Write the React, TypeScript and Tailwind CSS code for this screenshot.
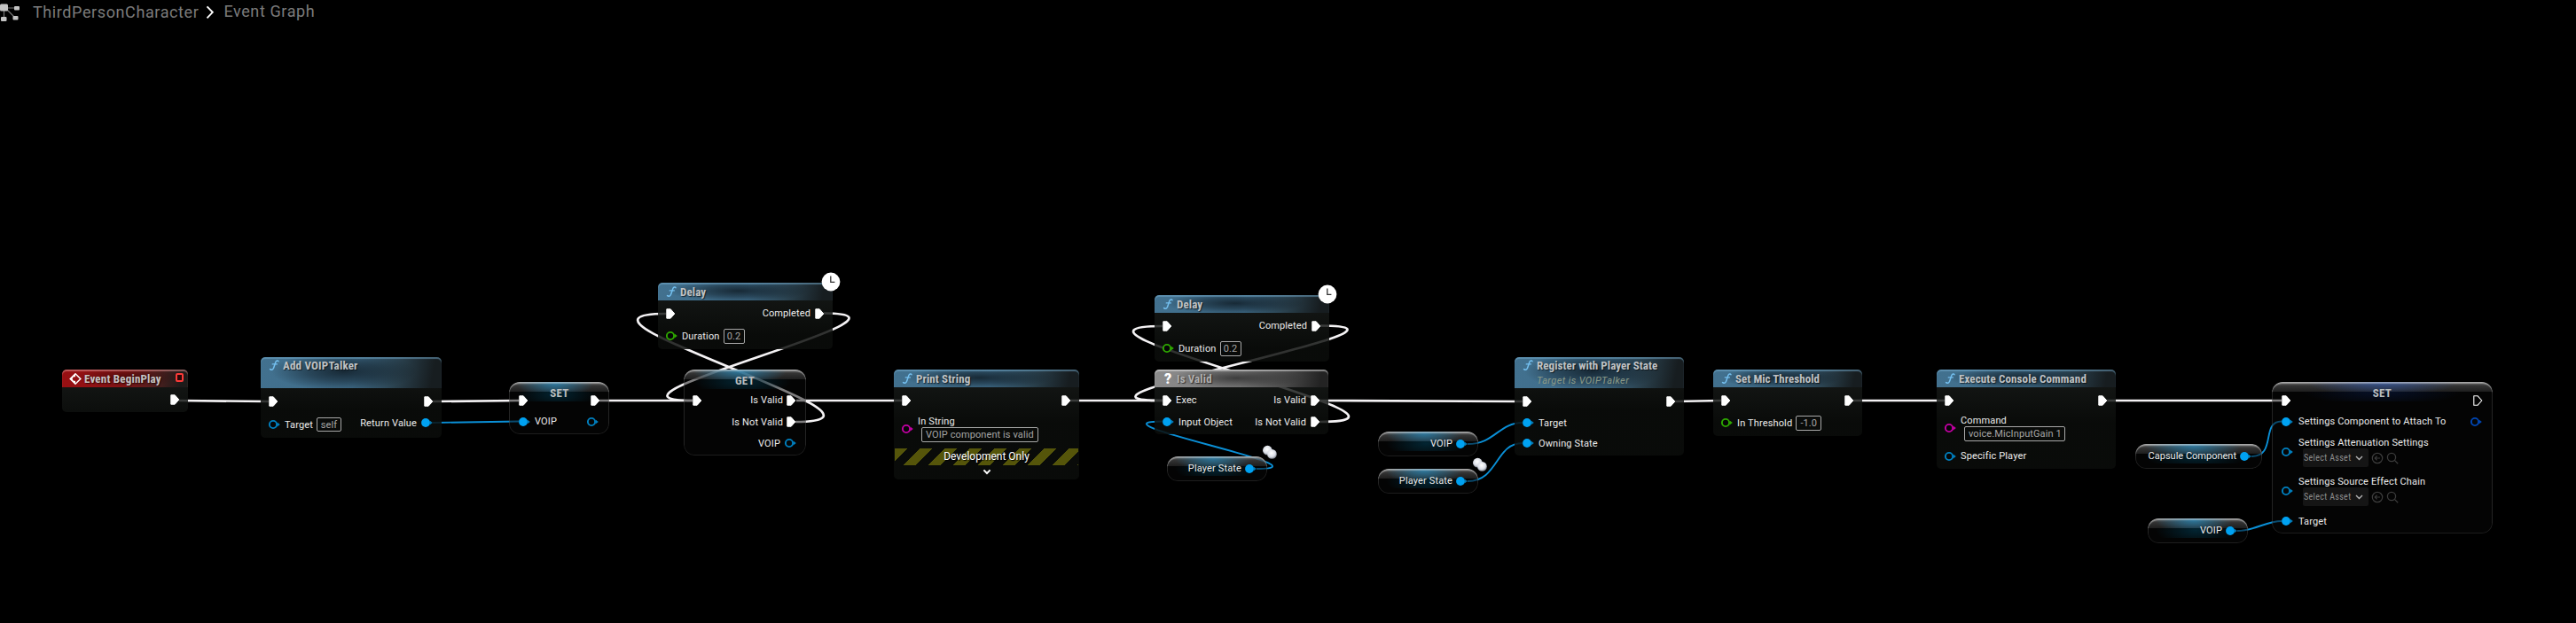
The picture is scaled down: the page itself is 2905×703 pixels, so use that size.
import type { ReactNode } from 'react';

const BLUE = '#00a2f2';
const RING = '#0080c0';
const GREEN = '#2ea800';
const PINK = '#c400a4';
const NAVY = '#0046b4';

function Exec({ hollow = false }: { hollow?: boolean }) {
  return (
    <svg className="h-3 w-[11px] shrink-0" viewBox="0 0 11 12">
      <path
        d="M.8.8h4.4l4.6 5.2-4.6 5.2H.8z"
        fill={hollow ? 'none' : '#fff'}
        stroke="#fff"
        strokeWidth={hollow ? 1.1 : 1}
        strokeLinejoin="round"
      />
    </svg>
  );
}

function Pin({ color, filled = false }: { color: string; filled?: boolean }) {
  return (
    <svg className="h-3 w-[13px] shrink-0" viewBox="0 0 13 12">
      <path d="M9.6 3.4 12.8 6 9.6 8.6z" fill={color} opacity={filled ? 0.75 : 1} />
      <circle cx="5" cy="6" r={filled ? 4.9 : 4.1} fill={filled ? color : '#050606'} stroke={filled ? 'none' : color} strokeWidth="1.9" />
    </svg>
  );
}

function Label({ children, className = 'tracking-[0.14px]' }: { children: ReactNode; className?: string }) {
  return <span className={`whitespace-nowrap text-[11px] leading-[13px] text-[#ececec] ${className}`}>{children}</span>;
}

function Box({ children, className = '' }: { children: ReactNode; className?: string }) {
  return (
    <span className={`flex items-center whitespace-nowrap rounded-[2px] border border-[#a8a8a8] text-[11px] leading-none tracking-[0.1px] text-[#a6a6a6] ${className}`}>
      {children}
    </span>
  );
}

function Row({ children, className = 'h-5' }: { children: ReactNode; className?: string }) {
  return <div className={`flex items-center justify-between pl-[9px] pr-[9px] ${className}`}>{children}</div>;
}

function Side({ children, className = 'gap-[5px]' }: { children?: ReactNode; className?: string }) {
  return <div className={`flex items-center ${className}`}>{children}</div>;
}

const HEADS = {
  func: 'bg-[radial-gradient(ellipse_40%_62%_at_46%_46%,rgba(12,22,30,0.78),rgba(12,22,30,0.45)_50%,transparent),linear-gradient(100deg,#42718f_0%,#3f6c89_52%,#2a414e_75%,#171d20_94%)] shadow-[inset_0_2px_1px_rgba(120,175,210,0.5)]',
  event: 'bg-[radial-gradient(ellipse_40%_60%_at_50%_45%,rgba(40,4,4,0.6),transparent),linear-gradient(100deg,#980f12_0%,#8c1517_50%,#55201f_72%,#1d1b1a_94%)] shadow-[inset_0_2px_1px_rgba(225,150,150,0.55)]',
  macro: 'bg-[radial-gradient(ellipse_38%_60%_at_47%_48%,rgba(20,20,20,0.6),transparent),linear-gradient(100deg,#8c8c8c_0%,#7a7a7a_50%,#4c4c4c_74%,#232323_95%)] shadow-[inset_0_2px_1px_rgba(235,235,235,0.5)]',
};

const FuncIcon = () => (
  <svg className="h-3 w-[14px] shrink-0" viewBox="0 0 14 12" fill="none" stroke="#74c0f0" strokeLinecap="round">
    <path d="M12 1.7C11.5.5 9.8.6 9 2.3 8 4.5 7.3 8 6.2 10 5.3 11.6 3.5 11.6 2.6 10.5" strokeWidth="1.5" />
    <path d="M5.2 4.9h5.2" strokeWidth="1.2" />
  </svg>
);

function Node({ place, title, titleClass = 'tracking-[0.12px] text-[#bfc2c5]', kind = 'func', icon = <FuncIcon />, sub, tall = false, badge, children }: {
  place: string; title: string; titleClass?: string; kind?: keyof typeof HEADS; icon?: ReactNode; sub?: string; tall?: boolean; badge?: ReactNode; children: ReactNode;
}) {
  return (
    <div className={`absolute flex flex-col rounded-[5px] bg-[linear-gradient(to_bottom,rgba(22,25,23,0.82)_20px,rgba(11,13,11,0.84)_60px)] ${place}`}>
      <div className={`flex shrink-0 items-start rounded-t-[5px] pl-[8px] ${tall ? 'h-[35px] pt-[3px]' : 'h-5 pt-[3.5px]'} ${HEADS[kind]}`}>
        {icon}
        <div className="ml-[3px] flex flex-col">
          <span className={`whitespace-nowrap font-['Roboto_Condensed',Roboto,sans-serif] text-[13px] font-bold leading-[13px] [text-shadow:1px_1px_1px_rgba(0,0,0,0.6)] ${titleClass}`}>{title}</span>
          {sub && <span className="mt-[4px] whitespace-nowrap text-[11px] italic leading-[13px] tracking-[0.4px] text-[#8c9b88]">{sub}</span>}
        </div>
        {badge}
      </div>
      {children}
    </div>
  );
}

function Gloss({ navy = false }: { navy?: boolean }) {
  return (
    <>
      <div className="absolute inset-x-0 top-0 h-[11px] bg-[linear-gradient(to_bottom,rgba(165,165,165,0.65),rgba(90,90,90,0.55)_40%,rgba(50,50,50,0.55))]" />
      <div className={navy
        ? 'absolute inset-x-0 top-0 h-[11px] bg-[radial-gradient(ellipse_34%_130%_at_50%_10%,rgba(50,85,160,0.75),transparent)]'
        : 'absolute inset-x-0 top-0 h-[11px] bg-[radial-gradient(ellipse_38%_140%_at_46%_20%,rgba(40,130,175,0.8),transparent)]'} />
      <div className={navy
        ? 'absolute inset-x-0 top-[11px] h-[11px] bg-[radial-gradient(ellipse_36%_140%_at_50%_0%,rgba(8,25,65,0.6),transparent)]'
        : 'absolute inset-x-0 top-[11px] h-[11px] bg-[radial-gradient(ellipse_40%_160%_at_48%_20%,rgba(2,45,62,0.8),transparent)]'} />
    </>
  );
}

function VarNode({ place, navy, children }: { place: string; navy?: boolean; children: ReactNode }) {
  return (
    <div className={`absolute overflow-hidden rounded-[12px] bg-[rgba(7,8,8,0.5)] ${place}`}>
      <Gloss navy={navy} />
      <div className="absolute inset-0 rounded-[12px] shadow-[inset_0_0_0_1px_rgba(255,255,255,0.1),inset_0_2px_1px_rgba(255,255,255,0.35)]" />
      <div className="relative flex h-full flex-col">{children}</div>
    </div>
  );
}

function Pill({ place, label, labelClass = 'tracking-[0.14px]' }: { place: string; label: string; labelClass?: string }) {
  return (
    <VarNode place={`h-[28px] ${place}`}>
      <div className="flex h-full items-center justify-end gap-[4px] pr-[12px]">
        <Label className={`pb-[1px] ${labelClass}`}>{label}</Label>
        <Pin color={BLUE} filled />
      </div>
    </VarNode>
  );
}

const VarTitle = ({ children }: { children: ReactNode }) => (
  <span className="block font-['Roboto_Condensed',Roboto,sans-serif] text-[13px] font-bold leading-[13px] tracking-[0.3px] text-[#b9bdbf]">{children}</span>
);

function Clock() {
  return (
    <svg className="absolute -right-[9px] -top-[12px] size-[22px]" viewBox="0 0 22 22">
      <circle cx="11" cy="11" r="10.4" fill="#fff" />
      <path d="M10.8 4.4v7h4.6" fill="none" stroke="#333" strokeWidth="1.3" />
    </svg>
  );
}

function Balls({ place }: { place: string }) {
  return (
    <svg className={`absolute h-[17px] w-[18px] ${place}`} viewBox="0 0 18 17">
      <defs>
        <radialGradient id="ball" cx="45%" cy="38%" r="62%">
          <stop offset="0" stopColor="#fff" />
          <stop offset="0.65" stopColor="#d9dde6" />
          <stop offset="1" stopColor="#7d828c" />
        </radialGradient>
      </defs>
      <circle cx="6.4" cy="6.2" r="5.4" fill="url(#ball)" />
      <circle cx="11.4" cy="10.4" r="5.4" fill="url(#ball)" />
    </svg>
  );
}

function Delay({ place }: { place: string }) {
  return (
    <Node place={`h-[75px] w-[197px] ${place}`} title="Delay" badge={<Clock />}>
      <Row className="h-[30px]">
        <Exec />
        <Side><Label className="pb-[1px] tracking-[0.1px]">Completed</Label><Exec /></Side>
      </Row>
      <Row>
        <Side><Pin color={GREEN} /><Label>Duration</Label><Box className="-ml-[1px] h-[17px] w-[24px] justify-center">0.2</Box></Side>
      </Row>
    </Node>
  );
}

function AssetRow({ label }: { label: string }) {
  return (
    <div className="flex h-[44px] items-start gap-[6px] pl-[11px] pt-[6px]">
      <div className="pt-[11px]"><Pin color={RING} /></div>
      <div className="flex flex-col">
        <Label>{label}</Label>
        <div className="ml-[5px] flex items-center">
          <div className="flex h-[21px] w-[74px] items-center justify-between rounded-[2px] bg-[#151515] pl-[1px] pr-[6px]">
            <span className="whitespace-nowrap font-['Roboto_Condensed',Roboto,sans-serif] text-[10px] leading-none tracking-[0.35px] text-[#8e8e8e]">Select Asset</span>
            <svg className="h-[6px] w-[9px]" viewBox="0 0 9 6"><path d="m1 1 3.5 3.5L8 1" fill="none" stroke="#b4b4b4" strokeWidth="1.4" /></svg>
          </div>
          <svg className="ml-[3px] size-[14px]" viewBox="0 0 14 14" fill="none" stroke="#3c3c3c" strokeWidth="1.2">
            <circle cx="7" cy="7" r="5.7" /><path d="M10 7H4.4M6.6 4.6 4.2 7l2.4 2.4" />
          </svg>
          <svg className="ml-[3px] size-[14px]" viewBox="0 0 14 14" fill="none" stroke="#3c3c3c" strokeWidth="1.3">
            <circle cx="6" cy="6" r="4.6" /><path d="m9.4 9.4 3.8 3.8" />
          </svg>
        </div>
      </div>
    </div>
  );
}

const EXEC_WIRES = [
  'M202 452 303 453', 'M488 453 585 452', 'M676 452H781', 'M898 452H1017', 'M1207 452H1311', 'M1488 452 1717 453',
  'M1889 453 1941 452', 'M2090 452H2193', 'M2376 452H2573',
  'M897 476C1049 476 599 354 751 354', 'M929 353.5C1069 353.5 641 452 781 452',
  'M1488 476C1651 476 1148 368 1311 368', 'M1489 367.5C1643 367.5 1157 452 1311 452',
];
const DATA_WIRES = [
  'M488 477 585 475.5', 'M1417 529C1508 529 1220 475.5 1311 475.5', 'M1655 501C1686 501 1690 477 1717 477',
  'M1655 543C1690 543 1686 500 1717 500', 'M2539 515C2568 515 2549 475.5 2573 475.5', 'M2523 599C2542 599 2556 588 2573 588',
];

export default function App() {
  return (
    <div className="relative h-[703px] w-[2905px] overflow-hidden bg-black font-['Roboto',sans-serif]">
      <header className="flex h-[28px] items-center text-[18px] leading-none tracking-[0.6px] text-[#7b7b7b]">
        <svg className="h-[28px] w-[24px]" viewBox="0 0 24 28">
          <path d="M6 9h12M4.5 9v12M8 11l9 9" stroke="#777" strokeWidth="1.2" />
          <g fill="#c4c4c4">
            <rect x="0" y="4.5" width="9" height="8" rx="1.5" />
            <rect x="16" y="7" width="6" height="4.5" rx="1" />
            <rect x="1" y="19" width="6.5" height="5" rx="1" />
            <rect x="14.5" y="18" width="6" height="4.5" rx="1" />
          </g>
        </svg>
        <span className="ml-[13px] whitespace-nowrap">ThirdPersonCharacter</span>
        <svg className="ml-[8px] h-[16px] w-[10px]" viewBox="0 0 10 16"><path d="m1.5 1.3 6.3 6.5-6.3 6.6" fill="none" stroke="#fff" strokeWidth="1.9" /></svg>
        <span className="ml-[10px] whitespace-nowrap pb-[2px]">Event Graph</span>
      </header>

      <svg className="absolute left-0 top-0 h-[703px] w-[2905px]" viewBox="0 0 2905 703" fill="none">
        <g stroke="#f4f2f4" strokeWidth="2.7">{EXEC_WIRES.map((d) => <path key={d} d={d} />)}</g>
        <g stroke="#0a8fd6" strokeWidth="1.9">{DATA_WIRES.map((d) => <path key={d} d={d} />)}</g>
      </svg>

      <Node
        place="left-[70px] top-[417px] h-[48px] w-[142px]"
        kind="event"
        title="Event BeginPlay"
        titleClass="tracking-[0.2px] text-[#c6c2c2]"
        icon={
          <svg className="h-[13px] w-[14px] shrink-0" viewBox="0 0 14 13">
            <path d="M7 .8 12.8 6.5 7 12.2 1.2 6.5z" fill="none" stroke="#fff" strokeWidth="1.5" />
            <path d="M7 .8v3.4H4.8L3.5 6.5l1.3 2.3H7v3.4L1.2 6.5z" fill="#fff" />
          </svg>
        }
        badge={<span className="ml-auto mr-[5px] h-[10px] w-[9px] rounded-[2px] border-2 border-[#fb3a38] bg-[#2a0808]" />}
      >
        <div className="flex h-[30px] items-center justify-end pr-[9px]"><Exec /></div>
      </Node>

      <Node place="left-[294px] top-[403px] h-[91px] w-[204px]" title="Add VOIPTalker" titleClass="tracking-[0.2px] text-[#bfc2c5]" tall>
        <Row className="h-[30px]"><Exec /><Exec /></Row>
        <Row>
          <Side className="gap-[5px] pt-[2px]"><Pin color={RING} /><Label>Target</Label><Box className="-ml-[1px] h-[16px] w-[28px] justify-center">self</Box></Side>
          <Side className="gap-[5px] pb-[2px] pr-px"><Label>Return Value</Label><Pin color={BLUE} filled /></Side>
        </Row>
      </Node>

      <VarNode place="left-[574px] top-[431px] h-[59px] w-[113px]">
        <div className="flex h-[33px] items-end justify-between pb-[6px] pl-[11px] pr-[10px]">
          <Exec /><div className="self-start pt-[6px]"><VarTitle>SET</VarTitle></div><Exec />
        </div>
        <div className="flex h-[23px] items-center justify-between pl-[11px] pr-[12px]">
          <Side><Pin color={BLUE} filled /><Label>VOIP</Label></Side>
          <Pin color={RING} />
        </div>
      </VarNode>

      <Delay place="left-[742px] top-[319px]" />

      <VarNode place="left-[771px] top-[417px] h-[97px] w-[138px]">
        <div className="flex h-[23px] items-start justify-center pt-[6px]"><VarTitle>GET</VarTitle></div>
        <div className="flex h-6 items-center justify-between pl-[10px] pr-[11px]">
          <Exec />
          <Side className="gap-[4px]"><Label className="pb-[1px] tracking-[0.14px]">Is Valid</Label><Exec /></Side>
        </div>
        <div className="flex h-6 items-center justify-end gap-[4px] pr-[11px]"><Label>Is Not Valid</Label><Exec /></div>
        <div className="flex h-6 items-center justify-end gap-[5px] pr-[11px]"><Label>VOIP</Label><Pin color={RING} /></div>
      </VarNode>

      <Node place="left-[1008px] top-[417px] h-[124px] w-[209px]" title="Print String">
        <Row className="h-[30px]"><Exec /><Exec /></Row>
        <Row className="h-[34px]">
          <Side>
            <Pin color={PINK} />
            <div className="flex flex-col"><Label>In String</Label><Box className="ml-[4px] h-[17px] w-[132px] pl-[4px]">VOIP component is valid</Box></div>
          </Side>
        </Row>
        <div className="mx-px mt-[5px] flex h-[19px] items-center justify-center bg-[repeating-linear-gradient(135deg,#55550a_0,#55550a_9.9px,transparent_9.9px,transparent_19.8px)]">
          <span className="whitespace-nowrap pb-[2px] text-[12px] leading-none text-white [text-shadow:1px_1px_1px_#000]">Development Only</span>
        </div>
        <svg className="mx-auto mt-[4px] h-[7px] w-[10px]" viewBox="0 0 10 7"><path d="m1.4 1.4 3.6 3.6 3.6-3.6" fill="none" stroke="#fff" strokeWidth="2" /></svg>
      </Node>

      <Delay place="left-[1302px] top-[333px]" />

      <Node
        place="left-[1302px] top-[417px] h-[73px] w-[196px]"
        kind="macro"
        title="Is Valid"
        titleClass="tracking-[0.12px] text-[#b0b0b0]"
        icon={<span className="w-[14px] shrink-0 text-center text-[16px] font-black leading-[14px] text-white">?</span>}
      >
        <Row className="h-[30px]">
          <Side className="gap-[4px]"><Exec /><Label className="pb-[1px] tracking-[0.14px]">Exec</Label></Side>
          <Side><Label className="pb-[1px] tracking-[0.14px]">Is Valid</Label><Exec /></Side>
        </Row>
        <Row className="h-[18px]">
          <Side><Pin color={BLUE} filled /><Label>Input Object</Label></Side>
          <Side><Label>Is Not Valid</Label><Exec /></Side>
        </Row>
      </Node>

      <Pill place="left-[1316px] top-[515px] w-[113px]" label="Player State" />
      <Balls place="left-[1423px] top-[502px]" />
      <Pill place="left-[1554px] top-[487px] w-[113px]" label="VOIP" />
      <Pill place="left-[1554px] top-[529px] w-[113px]" label="Player State" />
      <Balls place="left-[1660px] top-[516px]" />

      <Node place="left-[1708px] top-[403px] h-[111px] w-[191px]" title="Register with Player State" titleClass="tracking-[0.06px] text-[#bfc2c5]" sub="Target is VOIPTalker" tall>
        <Row className="h-[30px]"><Exec /><Exec /></Row>
        <Row className="h-[18px]"><Side><Pin color={BLUE} filled /><Label>Target</Label></Side></Row>
        <Row className="h-[28px]"><Side><Pin color={BLUE} filled /><Label>Owning State</Label></Side></Row>
      </Node>

      <Node place="left-[1932px] top-[417px] h-[75px] w-[168px]" title="Set Mic Threshold" titleClass="tracking-[0.04px] text-[#bfc2c5]">
        <Row className="h-[30px]"><Exec /><Exec /></Row>
        <Row><Side><Pin color={GREEN} /><Label>In Threshold</Label><Box className="-ml-[1px] h-[17px] w-[29px] justify-center">-1.0</Box></Side></Row>
      </Node>

      <Node place="left-[2184px] top-[417px] h-[112px] w-[202px]" title="Execute Console Command">
        <Row className="h-[30px]"><Exec /><Exec /></Row>
        <Row className="h-[34px]">
          <Side>
            <Pin color={PINK} />
            <div className="flex flex-col"><Label>Command</Label><Box className="ml-[4px] h-[17px] w-[114px] pl-[4px]">voice.MicInputGain 1</Box></div>
          </Side>
        </Row>
        <Row className="h-[29px]"><Side><Pin color={RING} /><Label>Specific Player</Label></Side></Row>
      </Node>

      <Pill place="left-[2408px] top-[501px] w-[143px]" label="Capsule Component" labelClass="tracking-normal" />
      <Pill place="left-[2422px] top-[585px] w-[113px]" label="VOIP" />

      <VarNode place="left-[2562px] top-[431px] h-[171px] w-[249px]" navy>
        <div className="flex h-[33px] items-end justify-between pb-[6px] pl-[11px] pr-[11px]">
          <Exec /><div className="self-start pt-[6px]"><VarTitle>SET</VarTitle></div><Exec hollow />
        </div>
        <div className="flex h-[23px] items-center justify-between pl-[11px] pr-[12px]">
          <Side className="gap-[6px]"><Pin color={BLUE} filled /><Label>Settings Component to Attach To</Label></Side>
          <Pin color={NAVY} />
        </div>
        <AssetRow label="Settings Attenuation Settings" />
        <AssetRow label="Settings Source Effect Chain" />
        <div className="flex h-[26px] items-center gap-[6px] pl-[11px]"><Pin color={BLUE} filled /><Label>Target</Label></div>
      </VarNode>
    </div>
  );
}
